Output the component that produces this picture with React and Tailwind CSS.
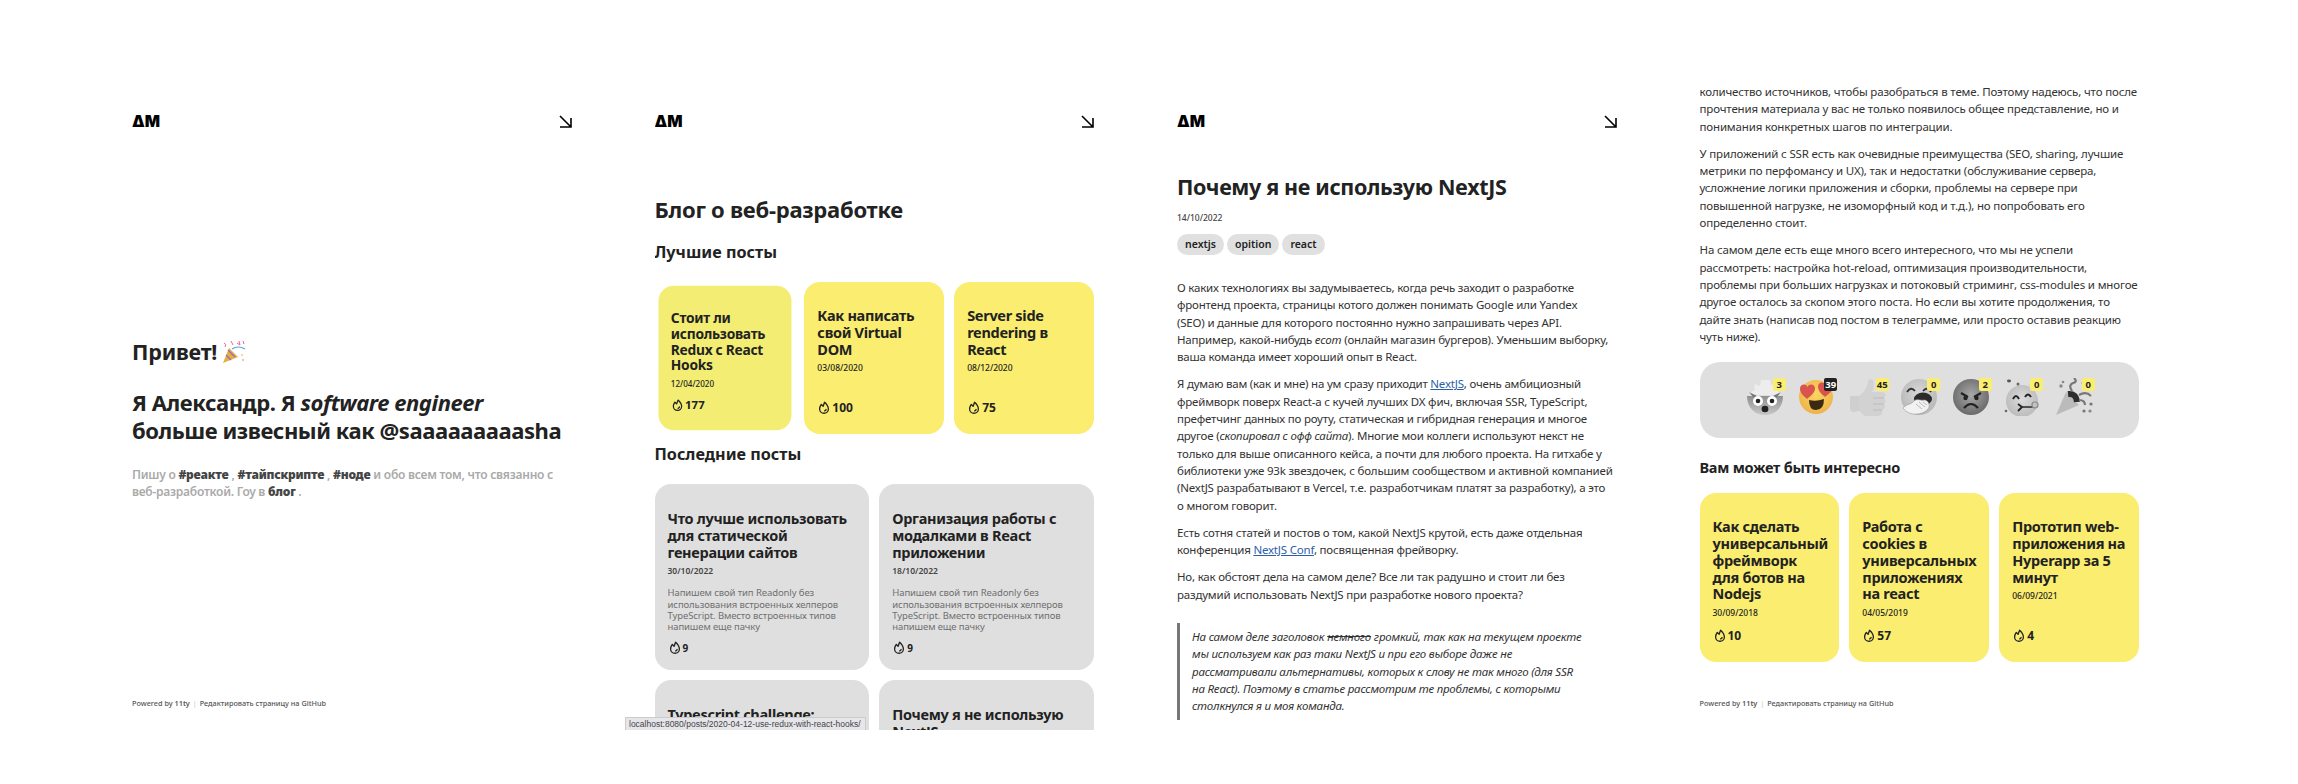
import { PiFireBold } from "react-icons/pi";

const font = "[font-family:'Noto_Sans','Open_Sans',sans-serif]";

function Header() {
  return (
    <div className="flex items-start justify-between h-[52px] pt-[37px]">
      <div className="h-[13px] text-[16px] leading-[13px] font-black text-black [font-family:'Inter',sans-serif]">ΔM</div>
      <svg width="13" height="13" viewBox="0 0 13 13" fill="none" stroke="black" strokeWidth="1.6">
        <path d="M1 1 L12 12 M12 3 V12 H1" />
      </svg>
    </div>
  );
}

function Footer() {
  return (
    <div className="text-[7.3px] leading-[12px] text-[#555] font-medium whitespace-nowrap">
      Powered by <b className="font-semibold">11ty</b> <span className="text-[#ccc] mx-[1px]">|</span> Редактировать страницу на GitHub
    </div>
  );
}

function YellowCard({ title, date, count, scaled }) {
  return (
    <div className={`flex flex-col justify-between rounded-[16px] px-[13px] pt-[25px] pb-[19px] text-[#222] ${scaled ? "bg-[#f3ee73] scale-95" : "bg-[#faed70]"}`}>
      <div>
        <div className="text-[14.5px] leading-[16.8px] font-bold tracking-[-0.3px]">{title}</div>
        <div className="text-[8.5px] leading-[10px] font-medium mt-[6px]">{date}</div>
      </div>
      <div className="flex items-center gap-[1px] text-[12px] leading-[14px] font-bold mt-[11px]">
        <PiFireBold className="w-[14px] h-[14px]" />
        {count}
      </div>
    </div>
  );
}

function GrayCard({ title, date, count, desc }) {
  return (
    <div className="rounded-[16px] bg-[#dfdfdf] px-[13px] pt-[26px] h-[186px] shrink-0 text-[#222]">
      <div className="text-[14.5px] leading-[16.8px] font-bold tracking-[-0.3px]">{title}</div>
      <div className="text-[8.5px] leading-[10px] font-semibold text-[#444] mt-[6px]">{date}</div>
      <div className="text-[9.5px] leading-[11.3px] tracking-[-0.1px] text-[#6f6f6f] mt-[11px]">{desc}</div>
      <div className="flex items-center gap-[1px] text-[10px] leading-[14px] font-bold mt-[8px]">
        <PiFireBold className="w-[14px] h-[14px]" />
        {count}
      </div>
    </div>
  );
}

const grayDesc = (
  <>
    Напишем свой тип Readonly без
    <br />
    использования встроенных хелперов
    <br />
    TypeScript. Вместо встроенных типов
    <br />
    напишем еще пачку
  </>
);

function Badge({ value, dark }) {
  return (
    <span className={`absolute top-0 right-[-2px] h-[13px] w-[13px] rounded-[2px] flex items-center justify-center text-[9.5px] leading-[13px] font-bold ${dark ? "bg-[#222] text-white" : "bg-[#faed70] text-[#222]"}`}>
      {value}
    </span>
  );
}

function HeadBlast() {
  return (
    <svg width="38" height="38" viewBox="0 0 38 38">
      <defs>
        <linearGradient id="blastHead" x1="0" y1="0" x2="0" y2="1">
          <stop offset="0" stopColor="#8f8f8f" />
          <stop offset="1" stopColor="#c8c8c8" />
        </linearGradient>
      </defs>
      <path d="M1 18 H37 C37 30 29 37 19 37 C9 37 1 30 1 18 Z" fill="url(#blastHead)" />
      <path d="M8 6 L14 8 L15 2 L24 2 L25 7 L32 5 L29 12 L36 15 L26 17 L12 17 L2 15 L9 12 Z" fill="#ededed" />
      <path d="M3 14 L13 19 L8 20 Z M35 14 L25 19 L30 20 Z" fill="#777" />
      <circle cx="12" cy="23" r="5" fill="#fff" />
      <circle cx="26" cy="23" r="5" fill="#fff" />
      <circle cx="12" cy="23" r="2.3" fill="#222" />
      <circle cx="26" cy="23" r="2.3" fill="#222" />
      <ellipse cx="19" cy="31" rx="3.4" ry="3.2" fill="#222" />
    </svg>
  );
}

function Heart({ x, y }) {
  return (
    <path
      transform={`translate(${x} ${y})`}
      d="M0 3.6 C0 -1 6 -2 7.5 2 C9 -2 15 -1 15 3.6 C15 8 10.5 11 7 14 C3.5 11 0 8 0 3.6 Z"
      fill="#d9534f"
    />
  );
}

function HeartEyes() {
  return (
    <svg width="38" height="38" viewBox="0 0 38 38">
      <defs>
        <radialGradient id="loveFace" cx="0.5" cy="0.4" r="0.6">
          <stop offset="0" stopColor="#fbd860" />
          <stop offset="1" stopColor="#eeb24a" />
        </radialGradient>
      </defs>
      <circle cx="19" cy="19" r="17" fill="url(#loveFace)" />
      <Heart x={3} y={7} />
      <Heart x={21} y={5} />
      <path d="M12 22 Q19 24 27 21 Q27 32 19 32 Q12 32 12 22 Z" fill="#3a2a12" />
    </svg>
  );
}

function ThumbUp() {
  return (
    <svg width="38" height="38" viewBox="0 0 38 38">
      <path d="M1 18 H10 V33 L5 34 Q1 34 1 30 Z" fill="#cfcfcf" />
      <path d="M10 18 C15 14 18 11 19 3 C20 0 25 1 25 6 C25 10 24 12 23 14 H33 C37 14 37 19 35 20 C37 22 37 25 35 26 C37 28 36 31 33 32 C34 35 32 38 29 38 H16 L10 33 Z" fill="#d2d2d2" />
      <path d="M24 20 H35 M24 26 H35 M24 32 H33" stroke="#bcbcbc" strokeWidth="1" />
    </svg>
  );
}

function Yawn() {
  return (
    <svg width="38" height="38" viewBox="0 0 38 38">
      <defs>
        <radialGradient id="yawnFace" cx="0.5" cy="0.4" r="0.65">
          <stop offset="0" stopColor="#d8d8d8" />
          <stop offset="1" stopColor="#b4b4b4" />
        </radialGradient>
      </defs>
      <circle cx="19" cy="19" r="18" fill="url(#yawnFace)" />
      <path d="M7 14 Q11 8 15 13 M23 13 Q27 8 31 14" fill="none" stroke="#333" strokeWidth="1.8" />
      <ellipse cx="23" cy="21" rx="9" ry="6.5" fill="#2b2b2b" />
      <path d="M3 30 C8 25 11 27 14 23 C17 20 21 23 24 22 C28 22 31 27 28 31 C23 37 9 39 3 30 Z" fill="#f2f2f2" stroke="#999" strokeWidth="0.6" />
      <path d="M16 26 L22 31 M19 24 L25 29 M23 24 L27 27" stroke="#aaa" strokeWidth="0.8" />
    </svg>
  );
}

function Angry() {
  return (
    <svg width="38" height="38" viewBox="0 0 38 38">
      <defs>
        <radialGradient id="angryFace" cx="0.5" cy="0.45" r="0.55">
          <stop offset="0" stopColor="#a8a8a8" />
          <stop offset="1" stopColor="#6a6a6a" />
        </radialGradient>
      </defs>
      <circle cx="19" cy="19" r="18" fill="url(#angryFace)" />
      <path d="M9 15 L16 19 M29 15 L22 19" stroke="#222" strokeWidth="2.2" />
      <circle cx="13.5" cy="20" r="2.2" fill="#222" />
      <circle cx="24.5" cy="20" r="2.2" fill="#222" />
      <path d="M12 30 Q19 22 26 30" fill="none" stroke="#222" strokeWidth="2.2" />
    </svg>
  );
}

function PartyFace() {
  return (
    <svg width="38" height="38" viewBox="0 0 38 38">
      <defs>
        <radialGradient id="partyFace" cx="0.5" cy="0.45" r="0.6">
          <stop offset="0" stopColor="#dcdcdc" />
          <stop offset="1" stopColor="#b8b8b8" />
        </radialGradient>
      </defs>
      <circle cx="19" cy="23" r="16" fill="url(#partyFace)" />
      <path d="M10 21 Q13 15 16 21 M22 19 Q25 14 28 19" fill="none" stroke="#222" strokeWidth="2" />
      <path d="M15 26 L19 29 L15 33" fill="none" stroke="#222" strokeWidth="1.8" />
      <path d="M19 29 H30" stroke="#333" strokeWidth="1.6" />
      <circle cx="32" cy="27" r="3" fill="none" stroke="#888" strokeWidth="1.2" />
      <ellipse cx="6" cy="3" rx="2" ry="1.4" fill="#555" />
      <circle cx="15" cy="6" r="1.5" fill="#666" />
      <circle cx="3" cy="33" r="1.3" fill="#666" />
      <path d="M25 7 L31 4 L33 9 Z" fill="#cfcfcf" />
    </svg>
  );
}

function PopperGray() {
  return (
    <svg width="38" height="38" viewBox="0 0 38 38">
      <path d="M1 37 L11 14 L24 27 Z" fill="#bbb" />
      <path d="M13 16 Q21 15 22 24" fill="none" stroke="#2e2e2e" strokeWidth="6" />
      <path d="M17 13 Q13 7 18 5 Q23 4 19 0 M24 17 Q31 13 36 18 M24 22 Q30 22 30 27" fill="none" stroke="#777" strokeWidth="2.2" />
      <circle cx="6" cy="8" r="1.7" fill="#888" />
      <circle cx="8" cy="4" r="1.3" fill="#888" />
      <circle cx="28" cy="5" r="1.5" fill="#888" />
      <circle cx="36" cy="26" r="1.6" fill="#777" />
      <circle cx="29" cy="33" r="1.6" fill="#777" />
      <circle cx="35" cy="33" r="1.6" fill="#888" />
    </svg>
  );
}

function PartyPopper() {
  return (
    <svg width="24" height="24" viewBox="0 0 24 24">
      <path d="M1 23 L7 8 L16 17 Z" fill="#e2b13c" />
      <path d="M4 15 L9 20 M6 10 L13 17" stroke="#a45fd0" strokeWidth="1.2" />
      <path d="M10 9 Q16 5 23 9" fill="none" stroke="#58a6e8" strokeWidth="1.2" />
      <path d="M2 3 Q5 4 3 7 M9 1 L11 5 M15 3 L18 5 L17 1 M21 1 L22 4" fill="none" stroke="#e06a90" strokeWidth="1" />
      <circle cx="20" cy="15" r="0.8" fill="#e8a040" />
      <circle cx="21" cy="20" r="0.8" fill="#e06a90" />
    </svg>
  );
}

const reactions = [
  { Icon: HeadBlast, value: 3 },
  { Icon: HeartEyes, value: 39, dark: true },
  { Icon: ThumbUp, value: 45 },
  { Icon: Yawn, value: 0 },
  { Icon: Angry, value: 2 },
  { Icon: PartyFace, value: 0 },
  { Icon: PopperGray, value: 0 },
];

function Home() {
  return (
    <div className="h-full flex flex-col">
      <Header />
      <div className="mt-[207px] text-[#222]">
        <div className="flex items-center gap-[5px] text-[21.5px] leading-[30px] font-bold tracking-[-0.2px]">
          Привет! <PartyPopper />
        </div>
        <h1 className="mt-[22px] text-[22px] leading-[27.5px] font-bold whitespace-nowrap tracking-[-0.45px]">
          Я Александр. Я <i>software engineer</i>
          <br />
          больше извесный как @saaaaaaaaasha
        </h1>
        <p className="mt-[23px] text-[12px] leading-[16.5px] font-semibold text-[#aaa] whitespace-nowrap tracking-[-0.25px]">
          Пишу о <b className="text-[#444]">#реакте</b> , <b className="text-[#444]">#тайпскрипте</b> , <b className="text-[#444]">#ноде</b> и обо всем том, что связанно с
          <br />
          веб-разработкой. Гоу в <b className="text-[#444]">блог</b> .
        </p>
      </div>
      <div className="mt-auto mb-[21px]">
        <Footer />
      </div>
    </div>
  );
}

function Blog() {
  return (
    <div className="h-full overflow-hidden">
      <Header />
      <h1 className="mt-[64px] text-[22px] leading-[30px] font-bold text-[#222] tracking-[-0.25px]">Блог о веб-разработке</h1>
      <h2 className="mt-[16px] text-[16.2px] leading-[24px] font-bold text-[#222]">Лучшие посты</h2>
      <div className="mt-[18px] grid grid-cols-3 gap-[10px] h-[147px]">
        <YellowCard scaled title="Стоит ли использовать Redux с React Hooks" date="12/04/2020" count={177} />
        <YellowCard title="Как написать свой Virtual DOM" date="03/08/2020" count={100} />
        <YellowCard title="Server side rendering в React" date="08/12/2020" count={75} />
      </div>
      <h2 className="mt-[13px] text-[16.2px] leading-[24px] font-bold text-[#222]">Последние посты</h2>
      <div className="mt-[18px] grid grid-cols-2 gap-[10px]">
        <GrayCard title="Что лучше использовать для статической генерации сайтов" date="30/10/2022" count={9} desc={grayDesc} />
        <GrayCard title="Организация работы с модалками в React приложении" date="18/10/2022" count={9} desc={grayDesc} />
        <GrayCard title="Typescript challenge: Readonly" date="14/10/2022" count={9} desc={grayDesc} />
        <GrayCard title="Почему я не использую NextJS" date="14/10/2022" count={9} desc={grayDesc} />
      </div>
    </div>
  );
}

function Post() {
  return (
    <div className="h-full overflow-hidden text-[#333]">
      <Header />
      <h1 className="mt-[41px] text-[21.5px] leading-[32px] font-bold text-[#222] tracking-[-0.35px]">Почему я не использую NextJS</h1>
      <div className="mt-[9px] text-[8.5px] leading-[12px] font-medium text-[#444]">14/10/2022</div>
      <div className="mt-[10px] flex gap-[3px]">
        {["nextjs", "opition", "react"].map((tag) => (
          <span key={tag} className="h-[21px] px-[8px] rounded-full bg-[#e0e0e0] text-[10.5px] leading-[21px] font-semibold text-[#222]">{tag}</span>
        ))}
      </div>
      <div className="mt-[24px] text-[11.5px] leading-[17.3px] tracking-[-0.2px] whitespace-nowrap">
        <p>
          О каких технологиях вы задумываетесь, когда речь заходит о разработке
          <br />
          фронтенд проекта, страницы котого должен понимать Google или Yandex
          <br />
          (SEO) и данные для которого постоянно нужно запрашивать через API.
          <br />
          Например, какой-нибудь <i>ecom</i> (онлайн магазин бургеров). Уменьшим выборку,
          <br />
          ваша команда имеет хороший опыт в React.
        </p>
        <p className="mt-[10px]">
          Я думаю вам (как и мне) на ум сразу приходит <a className="text-[#2b5ea8] underline">NextJS</a>, очень амбициозный
          <br />
          фреймворк поверх React-а с кучей лучших DX фич, включая SSR, TypeScript,
          <br />
          префетчинг данных по роуту, статическая и гибридная генерация и многое
          <br />
          другое (<i>скопировал с офф сайта</i>). Многие мои коллеги используют некст не
          <br />
          только для выше описанного кейса, а почти для любого проекта. На гитхабе у
          <br />
          библиотеки уже 93k звездочек, с большим сообществом и активной компанией
          <br />
          (NextJS разрабатывают в Vercel, т.е. разработчикам платят за разработку), а это
          <br />
          о многом говорит.
        </p>
        <p className="mt-[10px]">
          Есть сотня статей и постов о том, какой NextJS крутой, есть даже отдельная
          <br />
          конференция <a className="text-[#2b5ea8] underline">NextJS Conf</a>, посвященная фрейворку.
        </p>
        <p className="mt-[10px]">
          Но, как обстоят дела на самом деле? Все ли так радушно и стоит ли без
          <br />
          раздумий использовать NextJS при разработке нового проекта?
        </p>
        <blockquote className="mt-[20px] border-l-[3px] border-[#777] pl-[12px] py-[5px] italic">
          На самом деле заголовок <s>немного</s> громкий, так как на текущем проекте
          <br />
          мы используем как раз таки NextJS и при его выборе даже не
          <br />
          рассматривали альтернативы, которых к слову не так много (для SSR
          <br />
          на React). Поэтому в статье рассмотрим те проблемы, с которыми
          <br />
          столкнулся я и моя команда.
        </blockquote>
      </div>
    </div>
  );
}

function PostEnd() {
  return (
    <div className="h-full flex flex-col text-[#333]">
      <div className="mt-[5px] text-[11.5px] leading-[17.3px] tracking-[-0.16px] whitespace-nowrap">
        <p>
          количество источников, чтобы разобраться в теме. Поэтому надеюсь, что после
          <br />
          прочтения материала у вас не только появилось общее представление, но и
          <br />
          понимания конкретных шагов по интеграции.
        </p>
        <p className="mt-[10px]">
          У приложений с SSR есть как очевидные преимущества (SEO, sharing, лучшие
          <br />
          метрики по перфомансу и UX), так и недостатки (обслуживание сервера,
          <br />
          усложнение логики приложения и сборки, проблемы на сервере при
          <br />
          повышенной нагрузке, не изоморфный код и т.д.), но попробовать его
          <br />
          определенно стоит.
        </p>
        <p className="mt-[10px]">
          На самом деле есть еще много всего интересного, что мы не успели
          <br />
          рассмотреть: настройка hot-reload, оптимизация производительности,
          <br />
          проблемы при больших нагрузках и потоковый стриминг, css-modules и многое
          <br />
          другое осталось за скопом этого поста. Но если вы хотите продолжения, то
          <br />
          дайте знать (написав под постом в телеграмме, или просто оставив реакцию
          <br />
          чуть ниже).
        </p>
      </div>
      <div className="mt-[17px] h-[76px] shrink-0 rounded-[20px] bg-[#dfdfdf] flex items-center justify-center gap-[13.5px] pb-[6px]">
        {reactions.map(({ Icon, value, dark }, i) => (
          <div key={i} className="relative w-[38px] h-[38px]">
            <Icon />
            <Badge value={value} dark={dark} />
          </div>
        ))}
      </div>
      <h2 className="mt-[17px] text-[14.5px] leading-[24px] font-bold text-[#222] tracking-[-0.25px]">Вам может быть интересно</h2>
      <div className="mt-[14px] grid grid-cols-3 gap-[10px] h-[164px]">
        <YellowCard title="Как сделать универсальный фреймворк для ботов на Nodejs" date="30/09/2018" count={10} />
        <YellowCard title="Работа с cookies в универсальных приложениях на react" date="04/05/2019" count={57} />
        <YellowCard title="Прототип web-приложения на Hyperapp за 5 минут" date="06/09/2021" count={4} />
      </div>
      <div className="mt-auto mb-[21px]">
        <Footer />
      </div>
    </div>
  );
}

export default function App() {
  return (
    <div className={`relative min-h-screen bg-white pl-[132px] pt-[78px] ${font}`}>
      <div className="grid grid-cols-4 gap-[83px] h-[652px] w-[2007px]">
        <Home />
        <Blog />
        <Post />
        <PostEnd />
      </div>
      <div className="absolute left-[625px] top-[717px] h-[13px] w-[241px] overflow-hidden whitespace-nowrap bg-[#e6e6ea] border-t border-x border-[#ccc] text-[8.5px] leading-[12px] text-[#444] px-[3px] [font-family:'Liberation_Sans',sans-serif]">
        localhost:8080/posts/2020-04-12-use-redux-with-react-hooks/
      </div>
    </div>
  );
}
